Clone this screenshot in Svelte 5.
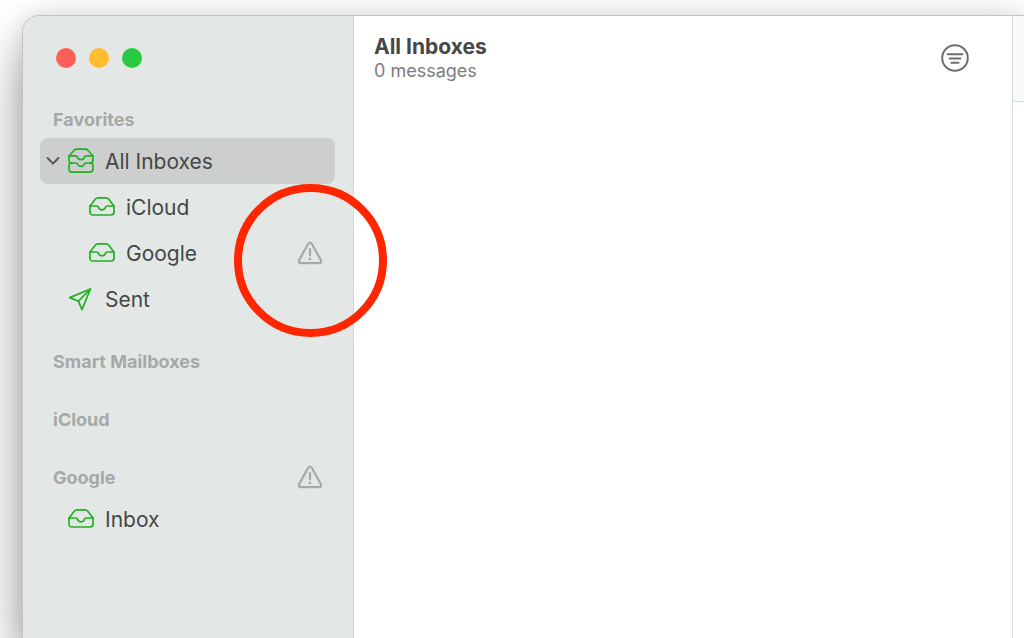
<script>
  let selected = "all";
  let expanded = true;

  const sections = [
    {
      label: "Favorites",
      items: [
        { id: "all", label: "All Inboxes", icon: "stack", parent: true },
        { id: "icloud", label: "iCloud", icon: "tray", child: true },
        { id: "google", label: "Google", icon: "tray", child: true, alert: true },
        { id: "sent", label: "Sent", icon: "plane" },
      ],
    },
    { label: "Smart Mailboxes", items: [] },
    { label: "iCloud", items: [] },
    {
      label: "Google",
      alert: true,
      items: [{ id: "inbox", label: "Inbox", icon: "tray" }],
    },
  ];
</script>

{#snippet warning()}
  <svg class="warning" viewBox="0 0 26 24" role="img" aria-label="Account offline">
    <path d="M11.2 2.8 Q13 .2 14.8 2.8 L23.6 18.6 Q25.2 22 21.8 22.2 H4.2 Q.8 22 2.4 18.6 Z" />
    <path d="M13 8 V14.4" />
    <circle cx="13" cy="18" r="1.3" />
  </svg>
{/snippet}

<div class="desktop">
  <div class="window">
    <nav class="sidebar">
      <div class="controls">
        <button class="close" aria-label="Close"></button>
        <button class="minimize" aria-label="Minimize"></button>
        <button class="zoom" aria-label="Zoom"></button>
      </div>

      {#each sections as section}
        <section>
          <h2>
            {section.label}
            {#if section.alert}{@render warning()}{/if}
          </h2>
          {#each section.items as item}
            {#if !item.child || expanded}
              <div class="row" class:child={item.child} class:selected={selected === item.id}>
                <div class="disclosure">
                  {#if item.parent}
                    <button aria-label="Toggle inboxes" on:click={() => (expanded = !expanded)}>
                      <svg viewBox="0 0 14 10"><path d="M1.6 2 L7 7.6 L12.4 2" /></svg>
                    </button>
                  {/if}
                </div>
                <button class="mailbox" on:click={() => (selected = item.id)}>
                  <svg class="icon" viewBox="0 0 26 26">
                    {#if item.icon === "stack"}
                      <path d="M4 15 Q1 15 1 12 V8 L6.2 2.2 Q7.2 1.2 8.6 1.2 H17.4 Q18.8 1.2 19.8 2.2 L25 8 V12 Q25 15 22 15" />
                      <path d="M1 7.8 H7.6 Q9 7.8 9.4 9 Q10.2 11.6 13 11.6 Q15.8 11.6 16.6 9 Q17 7.8 18.4 7.8 H25" />
                      <path d="M4 15 Q1 15 1 17.6 V21 Q1 24.2 4.2 24.2 H21.8 Q25 24.2 25 21 V17.6 Q25 15 22 15 H18 Q16.6 15 16.2 16.2 Q15.4 18.4 13 18.4 Q10.6 18.4 9.8 16.2 Q9.4 15 8 15 Z" />
                    {:else if item.icon === "tray"}
                      <path d="M1 12 L6.4 5 Q7.4 3.8 9 3.8 H17 Q18.6 3.8 19.6 5 L25 12 V18 Q25 21 22 21 H4 Q1 21 1 18 Z" />
                      <path d="M1 12 H7.8 Q9 12 9.4 13 Q10.2 15.8 13 15.8 Q15.8 15.8 16.6 13 Q17 12 18.2 12 H25" />
                    {:else}
                      <path d="M22.4 3 L1.8 11.6 L10.4 15.2 L14 23.6 Z" />
                      <path d="M22.4 3 L10.4 15.2" />
                    {/if}
                  </svg>
                  {item.label}
                </button>
                {#if item.alert}{@render warning()}{/if}
              </div>
            {/if}
          {/each}
        </section>
      {/each}
    </nav>

    <main>
      <header>
        <div>
          <h1>All Inboxes</h1>
          <p>0 messages</p>
        </div>
        <button class="filter" aria-label="Filter messages">
          <svg viewBox="0 0 28 28">
            <circle cx="14" cy="14" r="12.8" />
            <path d="M6.6 10.3 H21.4 M8.6 14.5 H19.4 M10.4 18.7 H17.6" />
          </svg>
        </button>
      </header>
    </main>

    <aside>
      <div class="toolbar"></div>
    </aside>

    <div class="marker"></div>
  </div>
</div>

<style>
  :global(body) {
    background: #fff;
    font-family: Inter, "Liberation Sans", sans-serif;
  }
  button {
    padding: 0;
    border: 0;
    background: none;
    color: inherit;
    font: inherit;
  }
  svg {
    display: block;
    fill: none;
    stroke: currentColor;
    stroke-linecap: round;
    stroke-linejoin: round;
  }
  .desktop {
    box-sizing: border-box;
    min-height: 100vh;
    padding: 16px 0 0 23px;
    display: flex;
    overflow: hidden;
  }
  .window {
    position: relative;
    flex: 1;
    display: flex;
    background: #fff;
    border-radius: 17px 0 0 0;
    box-shadow:
      0 0 0 1px #c2c4c3,
      0 0 24px rgba(0, 0, 0, 0.12),
      0 30px 56px rgba(0, 0, 0, 0.4);
  }
  .sidebar {
    box-sizing: border-box;
    flex: 0 0 331px;
    padding: 32px 18px 0 17px;
    background: #e3e8e6;
    border-right: 1px solid #d3d7d5;
    border-radius: 17px 0 0 0;
  }
  .controls {
    display: flex;
    gap: 13px;
    padding: 0 0 32px 33px;
    margin-left: -17px;
  }
  .controls button {
    width: 20px;
    height: 20px;
    border-radius: 50%;
  }
  .close {
    background: #ff5f57;
  }
  .minimize {
    background: #febc2e;
  }
  .zoom {
    background: #28c840;
  }
  section {
    margin-bottom: 20px;
  }
  h2 {
    display: flex;
    align-items: center;
    justify-content: space-between;
    height: 38px;
    margin: 0;
    padding: 0 12px 0 13px;
    color: #a6a9a8;
    font-size: 18px;
    font-weight: 700;
  }
  .row {
    display: flex;
    align-items: center;
    height: 46px;
    padding: 0 12px 0 6px;
    border-radius: 8px;
    color: #454746;
    font-size: 21px;
  }
  .child {
    padding-left: 27px;
  }
  .selected {
    background: #cdcfce;
  }
  .disclosure {
    width: 22px;
  }
  .disclosure button {
    display: block;
  }
  .disclosure svg {
    width: 14px;
    height: 10px;
    stroke: #555756;
    stroke-width: 2;
  }
  .mailbox {
    display: flex;
    flex: 1;
    align-items: center;
    gap: 11px;
    height: 100%;
  }
  .icon {
    width: 26px;
    height: 26px;
    color: #21b021;
    stroke-width: 1.7;
  }
  .warning {
    width: 26px;
    height: 24px;
    color: #a6a9a8;
    stroke-width: 2.2;
  }
  .warning circle {
    fill: currentColor;
    stroke: none;
  }
  main {
    flex: 1;
  }
  header {
    display: flex;
    justify-content: space-between;
    align-items: center;
    padding: 18px 43px 0 20px;
  }
  h1 {
    margin: 0;
    color: #474747;
    font-size: 21px;
    font-weight: 700;
    line-height: 26px;
  }
  p {
    margin: 0;
    color: #7d7d7d;
    font-size: 18px;
    line-height: 22px;
  }
  .filter {
    color: #6e6e6e;
  }
  .filter svg {
    width: 28px;
    height: 28px;
    stroke-width: 2;
  }
  aside {
    flex: 0 0 11px;
    border-left: 1px solid #dcdcdc;
  }
  .toolbar {
    height: 85px;
    background: #f6faf9;
    border-bottom: 1px solid #dcdcdc;
  }
  .marker {
    position: absolute;
    top: 168px;
    left: 211px;
    box-sizing: border-box;
    width: 153px;
    height: 153px;
    border: 8px solid #ff2600;
    border-radius: 50%;
    pointer-events: none;
  }
</style>
